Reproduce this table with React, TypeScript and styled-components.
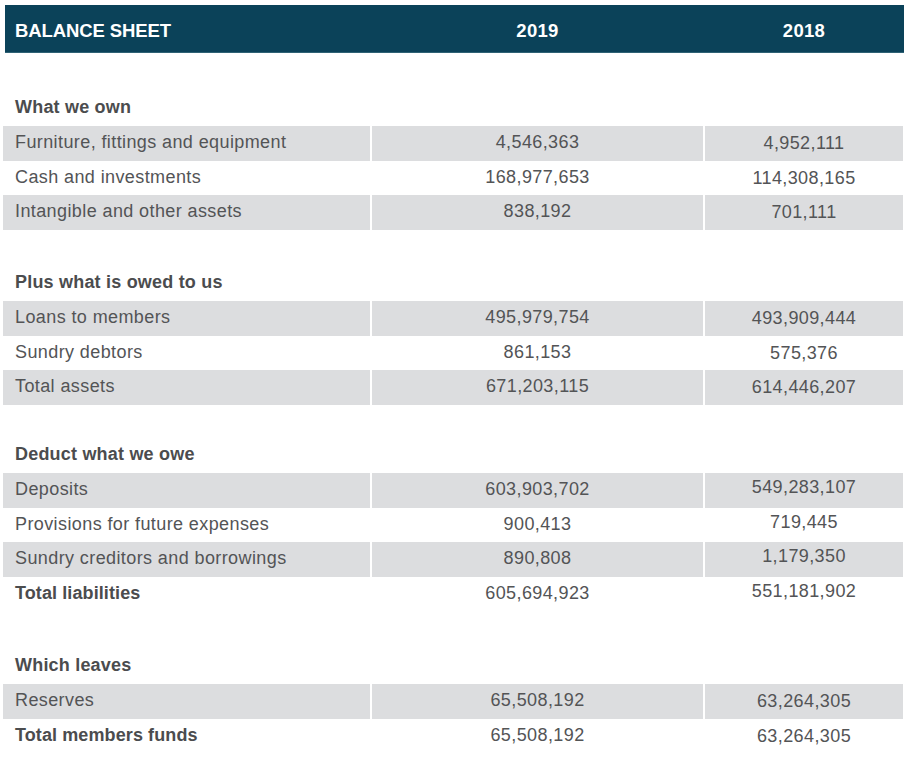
import React from "react";
import styled, { createGlobalStyle } from "styled-components";

const Global = createGlobalStyle`
  html, body { margin: 0; padding: 0; background: #ffffff; }
  body { font-family: "Liberation Sans", Arial, sans-serif; }
`;

type Row = { label: string; y2019: string; y2018: string; bold?: boolean };
type Section = { title: string; top: number; shift: number; rows: Row[] };

const sections: Section[] = [
  {
    title: "What we own",
    top: 37,
    shift: 2,
    rows: [
      { label: "Furniture, fittings and equipment", y2019: "4,546,363", y2018: "4,952,111" },
      { label: "Cash and investments", y2019: "168,977,653", y2018: "114,308,165" },
      { label: "Intangible and other assets", y2019: "838,192", y2018: "701,111" },
    ],
  },
  {
    title: "Plus what is owed to us",
    top: 35,
    shift: 2,
    rows: [
      { label: "Loans to members", y2019: "495,979,754", y2018: "493,909,444" },
      { label: "Sundry debtors", y2019: "861,153", y2018: "575,376" },
      { label: "Total assets", y2019: "671,203,115", y2018: "614,446,207" },
    ],
  },
  {
    title: "Deduct what we owe",
    top: 32,
    shift: -2,
    rows: [
      { label: "Deposits", y2019: "603,903,702", y2018: "549,283,107" },
      { label: "Provisions for future expenses", y2019: "900,413", y2018: "719,445" },
      { label: "Sundry creditors and borrowings", y2019: "890,808", y2018: "1,179,350" },
      { label: "Total liabilities", y2019: "605,694,923", y2018: "551,181,902", bold: true },
    ],
  },
  {
    title: "Which leaves",
    top: 37,
    shift: 1,
    rows: [
      { label: "Reserves", y2019: "65,508,192", y2018: "63,264,305" },
      { label: "Total members funds", y2019: "65,508,192", y2018: "63,264,305", bold: true },
    ],
  },
];

const Page = styled.div`
  padding: 5px 0 0 3px;
  width: 900px;
`;

const HeaderBar = styled.div`
  margin-left: 2px;
  width: 899px;
  height: 47px;
  background: #0b4259;
  border-bottom: 1px solid #2f6275;
  display: grid;
  grid-template-columns: 366px 333px 200px;
  align-items: center;
  color: #ffffff;
  font-weight: 700;
`;

const HeadCell = styled.div<{ $center?: boolean }>`
  padding-left: ${(p) => (p.$center ? "0" : "10px")};
  text-align: ${(p) => (p.$center ? "center" : "left")};
  padding-top: 4px;
  font-size: 18.5px;
  letter-spacing: ${(p) => (p.$center ? "0.3px" : "-0.1px")};
`;

const SectionBlock = styled.section<{ $top: number }>`
  margin-top: ${(p) => p.$top}px;
`;

const SectionTitle = styled.h2`
  margin: 0 0 2px 0;
  height: 34px;
  line-height: 34px;
  padding-left: 12px;
  font-size: 18px;
  font-weight: 700;
  letter-spacing: 0.2px;
  color: #4b4c4e;
`;

const Table = styled.div`
  display: grid;
  grid-template-columns: 367px 331px 198px;
  column-gap: 2px;
`;

const Cell = styled.div<{ $shade: boolean; $bold?: boolean; $num?: boolean; $dy?: number }>`
  height: ${(p) => (p.$shade ? "35px" : "34px")};
  background: ${(p) => (p.$shade ? "#dcdddf" : "transparent")};
  display: flex;
  align-items: center;
  justify-content: ${(p) => (p.$num ? "center" : "flex-start")};
  padding-left: ${(p) => (p.$num ? "0" : "12px")};
  box-sizing: border-box;
  font-size: 18px;
  letter-spacing: ${(p) => (p.$bold ? "0.1px" : "0.4px")};
  font-weight: ${(p) => (p.$bold ? 700 : 400)};
  color: ${(p) => (p.$bold ? "#4b4c4e" : "#535456")};
  padding-bottom: ${(p) => 2 - (p.$dy ?? 0) * 2}px;
`;

export default function App() {
  return (
    <>
      <Global />
      <Page>
        <HeaderBar>
          <HeadCell>BALANCE SHEET</HeadCell>
          <HeadCell $center>2019</HeadCell>
          <HeadCell $center>2018</HeadCell>
        </HeaderBar>
        {sections.map((s) => (
          <SectionBlock key={s.title} $top={s.top}>
            <SectionTitle>{s.title}</SectionTitle>
            <Table>
              {s.rows.map((r, i) => {
                const shade = i % 2 === 0;
                return (
                  <React.Fragment key={r.label}>
                    <Cell $shade={shade} $bold={r.bold}>{r.label}</Cell>
                    <Cell $shade={shade} $num $dy={0}>{r.y2019}</Cell>
                    <Cell $shade={shade} $num $dy={s.shift}>{r.y2018}</Cell>
                  </React.Fragment>
                );
              })}
            </Table>
          </SectionBlock>
        ))}
      </Page>
    </>
  );
}
